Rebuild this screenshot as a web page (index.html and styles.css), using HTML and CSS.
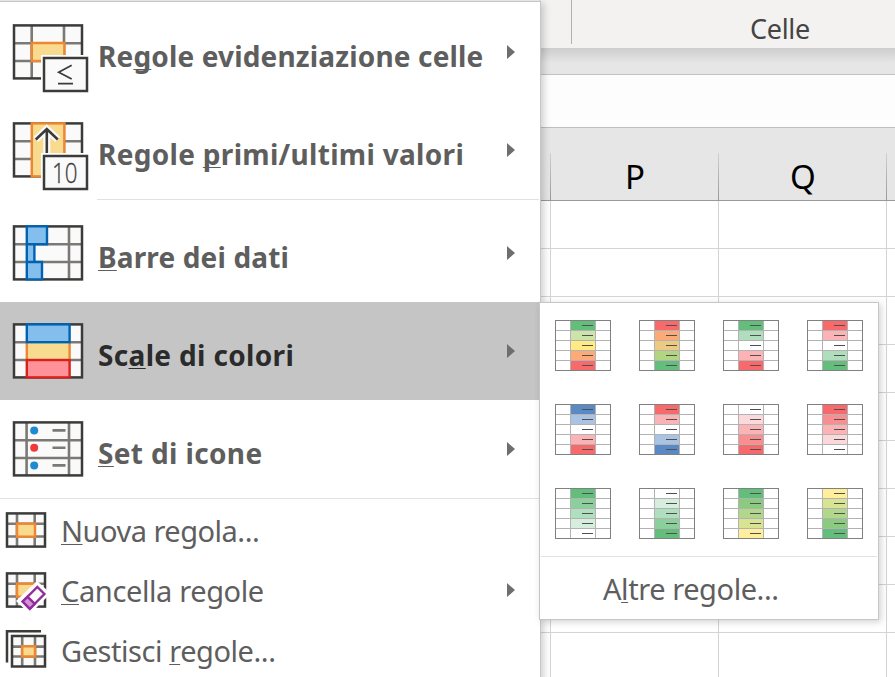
FILE: index.html
```html
<!DOCTYPE html>
<html lang="it">
<head>
<meta charset="utf-8">
<title>Formattazione condizionale</title>
<link rel="stylesheet" href="styles.css">
</head>
<body>
<svg class="defs" width="0" height="0">
  <symbol id="scale" viewBox="0 0 56 51">
    <g shape-rendering="crispEdges">
      <rect width="56" height="51" fill="#808080"/>
      <rect x="1" y="1" width="54" height="49" fill="#b2b2b2"/>
      <path fill="#fff" d="M1 1h14v9H1zM1 11h14v9H1zM1 21h14v9H1zM1 31h14v9H1zM1 41h14v9H1zM41 1h14v9H41zM41 11h14v9H41zM41 21h14v9H41zM41 31h14v9H41zM41 41h14v9H41z"/>
      <rect class="s1" x="16" y="1" width="24" height="9"/>
      <rect class="s2" x="16" y="11" width="24" height="9"/>
      <rect class="s3" x="16" y="21" width="24" height="9"/>
      <rect class="s4" x="16" y="31" width="24" height="9"/>
      <rect class="s5" x="16" y="41" width="24" height="9"/>
      <path fill="#505050" d="M27 5h11v1H27zM27 15h11v1H27zM27 25h11v1H27zM27 35h11v1H27zM27 45h11v1H27z"/>
    </g>
  </symbol>
</svg>

<main class="excel">
  <header class="ribbon"><div class="group">Celle</div></header>
  <div class="band"></div>
  <div class="formula"></div>
  <div class="columns"><span></span><span>P</span><span>Q</span><span></span></div>
  <div class="cells"></div>
</main>

<nav class="menu">
  <a class="item large">
    <svg class="icon" viewBox="0 0 98 98">
      <rect class="paper" x="14" y="22.4" width="68" height="53"/>
      <path class="lines" d="M31.7 23V75M64 23V75M15 40.3H81M15 58H81"/>
      <rect class="frame" x="14" y="22.4" width="68" height="53"/>
      <rect class="gold" x="31.8" y="40" width="32.6" height="18"/>
      <rect class="halo" x="41" y="52" width="49" height="40"/>
      <rect class="paper frame2" x="44" y="55" width="43" height="33"/>
      <path class="thin" d="M71.7 62.3L58.7 69.2L71.7 76M58 80.7H73"/>
    </svg>
    <span class="label t1">Re<u>g</u>ole evidenziazione celle</span><i class="arrow"></i>
  </a>
  <a class="item large">
    <svg class="icon" viewBox="0 0 98 98">
      <rect class="paper" x="14" y="22.4" width="68" height="53"/>
      <path class="lines" d="M15 40.3H81M15 58H81"/>
      <rect class="frame" x="14" y="22.4" width="68" height="53"/>
      <rect class="gold" x="31.8" y="22.4" width="32.6" height="53"/>
      <path class="arrowhalo" d="M46.8 54V29M35.8 38.5L46.8 28L57.8 38.5"/>
      <path class="arrowink" d="M46.8 54V29M35.8 38.5L46.8 28L57.8 38.5"/>
      <rect class="halo" x="41" y="52" width="49" height="40"/>
      <rect class="paper frame2" x="44" y="55" width="43" height="33"/>
      <text class="ten" x="52" y="81.7" textLength="25.5" lengthAdjust="spacingAndGlyphs">10</text>
    </svg>
    <span class="label t2">Regole <u>p</u>rimi/ultimi valori</span><i class="arrow"></i>
  </a>
  <hr class="inset">
  <a class="item large">
    <svg class="icon" viewBox="0 0 98 98">
      <rect class="paper" x="14" y="22.4" width="68" height="53"/>
      <path class="lines" d="M69 23V75M15 40.3H81M15 58H81"/>
      <rect class="frame" x="14" y="22.4" width="68" height="53"/>
      <path class="blue" d="M26.8 22.4H47V40.2H34.4V58H42V75.4H26.8ZM26.8 40.2H34.4M26.8 58H34.4"/>
    </svg>
    <span class="label t3"><u>B</u>arre dei dati</span><i class="arrow"></i>
  </a>
  <a class="item large active">
    <svg class="icon" viewBox="0 0 98 98">
      <rect class="paper" x="14" y="22.4" width="68" height="53"/>
      <path class="lines" d="M15 40.3H81M15 58H81"/>
      <rect class="frame" x="14" y="22.4" width="68" height="53"/>
      <path class="goldfill" d="M26.8 40H69.6V58H26.8Z"/>
      <path class="goldside" d="M26.8 40V58M69.6 40V58"/>
      <rect class="blue" x="26.8" y="22.4" width="42.8" height="17.8"/>
      <rect class="red" x="26.8" y="58" width="42.8" height="17.4"/>
    </svg>
    <span class="label t4">Sc<u>a</u>le di colori</span><i class="arrow"></i>
  </a>
  <a class="item large">
    <svg class="icon" viewBox="0 0 98 98">
      <rect class="paper" x="14" y="22.4" width="68" height="53"/>
      <path class="lines" d="M26.6 23V75M69 23V75M15 40.3H81M15 58H81M52.5 30.4H65.5M52.5 47.8H65.5M52.5 65.4H65.5"/>
      <rect class="frame" x="14" y="22.4" width="68" height="53"/>
      <circle class="dot" cx="34.2" cy="30.4" r="4"/>
      <circle class="dot alert" cx="34.2" cy="47.8" r="4"/>
      <circle class="dot" cx="34.2" cy="65.4" r="4"/>
    </svg>
    <span class="label t5"><u>S</u>et di icone</span><i class="arrow"></i>
  </a>
  <hr>
  <a class="item small">
    <svg class="icon" viewBox="0 0 60 60">
      <rect class="paper" x="7" y="11.4" width="38" height="33.2"/>
      <path class="lines" d="M17 12V44M34.7 12V44M8 21.7H44M8 34.5H44"/>
      <rect class="frame" x="7" y="11.4" width="38" height="33.2"/>
      <rect class="gold" x="17" y="21.7" width="18" height="13"/>
    </svg>
    <span class="label t6"><u>N</u>uova regola...</span>
  </a>
  <a class="item small">
    <svg class="icon" viewBox="0 0 60 60">
      <rect class="paper" x="7" y="11.4" width="38" height="33.2"/>
      <path class="lines" d="M17 12V44M34.7 12V44M8 21.7H44M8 34.5H44"/>
      <rect class="frame" x="7" y="11.4" width="38" height="33.2"/>
      <rect class="gold" x="17" y="21.7" width="18" height="13"/>
      <path class="halo" d="M37 19L48 29V34L30 52L16 39Z"/>
      <path class="eraser" d="M37.4 25L44.4 32L29.8 46.8L22.7 39.5Z"/>
      <path class="eraser tip" d="M27.6 34.8L34.8 41.8L29.8 46.8L22.7 39.5Z"/>
    </svg>
    <span class="label t7"><u>C</u>ancella regole</span><i class="arrow"></i>
  </a>
  <a class="item small">
    <svg class="icon" viewBox="0 0 60 60">
      <path class="frame" d="M41 9.2H7V40.5"/>
      <rect class="paper" x="12" y="14" width="33" height="30.5"/>
      <path class="lines" d="M22.2 15V44M35 15V44M13 24.6H44M13 34.5H44"/>
      <rect class="frame" x="12" y="14" width="33" height="30.5"/>
      <rect class="gold" x="22.2" y="24.3" width="12.8" height="10.2"/>
    </svg>
    <span class="label t8">Gestisci <u>r</u>egole...</span>
  </a>
</nav>

<section class="submenu">
  <div class="gallery">
    <svg class="g1"><use href="#scale"/></svg>
    <svg class="g2"><use href="#scale"/></svg>
    <svg class="g3"><use href="#scale"/></svg>
    <svg class="g4"><use href="#scale"/></svg>
    <svg class="g5"><use href="#scale"/></svg>
    <svg class="g6"><use href="#scale"/></svg>
    <svg class="g7"><use href="#scale"/></svg>
    <svg class="g8"><use href="#scale"/></svg>
    <svg class="g9"><use href="#scale"/></svg>
    <svg class="g10"><use href="#scale"/></svg>
    <svg class="g11"><use href="#scale"/></svg>
    <svg class="g12"><use href="#scale"/></svg>
  </div>
  <a class="more"><span class="t9">A<u>l</u>tre regole...</span></a>
</section>
</body>
</html>
```
FILE: styles.css
```css
* { box-sizing: border-box; }
body {
  margin: 0;
  width: 895px;
  height: 677px;
  overflow: hidden;
  position: relative;
  background: #fff;
  font-family: "Noto Sans", "Open Sans", sans-serif;
  color: #5e5e5e;
}
.defs { position: absolute; }

/* worksheet */
.excel { height: 677px; display: flex; flex-direction: column; }
.ribbon { height: 48px; background: #f3f2f0; padding-left: 571px; }
.group {
  height: 44px;
  border-left: 1px solid #b3b1af;
  padding: 9px 0 0 178px;
  font-size: 27px;
  line-height: 40px;
  letter-spacing: -0.3px;
  color: #444;
}
.band {
  height: 27px;
  background: linear-gradient(#cdcdcd, #e6e6e6 15px);
  border-bottom: 1px solid #c3c3c3;
}
.formula { height: 53px; background: #fdfdfd; border-bottom: 1px solid #bfbfbf; }
.columns {
  height: 73px;
  padding-top: 25px;
  background: #e6e6e6;
  border-bottom: 1px solid #999;
  display: grid;
  grid-template-columns: 551px 168px 168px 8px;
}
.columns span {
  text-align: center;
  color: #000;
  font-size: 33px;
  line-height: 47px;
  background: linear-gradient(#d0d0d0, #999) right / 1px 100% no-repeat;
}
.columns span:last-child { background: none; }
.cells {
  flex: 1;
  background:
    repeating-linear-gradient(transparent 0 47px, #d4d4d4 47px 48px),
    repeating-linear-gradient(90deg, transparent 0 167px, #d4d4d4 167px 168px) 47px 0;
}

/* menu */
.menu {
  position: absolute;
  left: 0;
  top: 0;
  width: 541px;
  height: 690px;
  padding-top: 2px;
  background: #fff;
  border-top: 1px solid #e5e5e5;
  border-right: 1px solid #c6c6c6;
  box-shadow: inset 0 1px #c6c6c6, 3px 3px 7px rgba(0, 0, 0, .18);
}
.item { display: flex; position: relative; }
.large { height: 98px; font-weight: 700; font-size: 28px; }
.small { height: 60px; font-size: 29px; }
.large .icon { width: 98px; height: 98px; }
.small .icon { width: 60px; height: 60px; }
.icon { flex: none; }
.label { white-space: nowrap; }
.large .label { line-height: 106px; }
.small .label { line-height: 58px; padding-left: 1px; }
.active { background: #c5c5c5; color: #2b2b2b; }
.t1 { letter-spacing: .16px; }
.t2 { letter-spacing: .31px; }
.t3 { letter-spacing: .15px; }
.t4 { letter-spacing: .34px; }
.t5 { letter-spacing: .36px; }
.t6 { letter-spacing: -.5px; }
.t7 { letter-spacing: -.38px; }
.t8 { letter-spacing: -.44px; }
.t9 { letter-spacing: -.43px; }
u {
  text-decoration: underline;
  text-decoration-thickness: 1px;
  text-underline-offset: 2px;
  text-decoration-skip-ink: none;
}
.arrow {
  position: absolute;
  left: 507px;
  top: 42px;
  border-left: 8px solid #6e6e6e;
  border-top: 7px solid transparent;
  border-bottom: 7px solid transparent;
}
.small .arrow { top: 21px; }
hr { height: 4px; margin: 0; border: 0; border-top: 1px solid #e1e1e1; }
hr.inset { height: 5px; margin: 0 1px 0 97px; }

/* icon parts */
.icon * { fill: none; }
.icon .paper { fill: #fafafa; }
.lines { stroke: #7a7974; stroke-width: 2.6; }
.frame, .frame2 { stroke: #3b3b39; stroke-width: 2.5; }
.icon .gold { fill: #f8db8f; stroke: #ed8733; stroke-width: 2.5; }
.icon .goldfill { fill: #f8db8f; }
.goldside { stroke: #ed8733; stroke-width: 2.4; }
.icon .blue { fill: #83beec; stroke: #0063b1; stroke-width: 2.4; }
.icon .red { fill: #ff9199; stroke: #d6211c; stroke-width: 2.4; }
.icon .halo { fill: #fff; }
.icon .dot { fill: #1f8ad0; }
.icon .alert { fill: #ef3a3a; }
.thin { stroke: #3b3b39; stroke-width: 1.7; }
.arrowink { stroke: #3b3b39; stroke-width: 2.6; }
.arrowhalo { stroke: #fafafa; stroke-width: 7; }
.icon .ten { fill: #3b3b39; stroke: #3b3b39; stroke-width: .3; font: 300 28px "Open Sans", sans-serif; }
.icon .eraser { fill: #fafafa; stroke: #922c9c; stroke-width: 2.4; }
.icon .tip { fill: #d492d8; }

/* submenu */
.submenu {
  position: absolute;
  left: 539px;
  top: 302px;
  width: 340px;
  height: 318px;
  background: #fff;
  border: 1px solid #c6c6c6;
  box-shadow: 2px 2px 7px rgba(0, 0, 0, .18);
}
.gallery {
  height: 253px;
  padding: 17px 0 0 15px;
  display: grid;
  grid-template-columns: repeat(4, 84px);
  grid-auto-rows: 84px;
}
.gallery svg { width: 56px; height: 51px; }
.more {
  display: block;
  margin: 0 1px;
  border-top: 1px solid #e1e1e6;
  padding-left: 62px;
  font-size: 29px;
  line-height: 63px;
  white-space: nowrap;
}
.s1 { fill: var(--a); }
.s2 { fill: var(--b); }
.s3 { fill: var(--c); }
.s4 { fill: var(--d); }
.s5 { fill: var(--e); }
.g1 { --a: #63be7b; --b: #cce3aa; --c: #ffeb84; --d: #fcaa78; --e: #f8696b; }
.g2 { --a: #f8696b; --b: #fcaa78; --c: #eec980; --d: #b1d580; --e: #63be7b; }
.g3 { --a: #63be7b; --b: #b0debd; --c: #fff; --d: #fbb3b5; --e: #f8696b; }
.g4 { --a: #f8696b; --b: #fbb3b5; --c: #fff; --d: #b0debd; --e: #63be7b; }
.g5 { --a: #5a8ac6; --b: #abc3e3; --c: #fff; --d: #fbb3b5; --e: #f8696b; }
.g6 { --a: #f8696b; --b: #fbb3b5; --c: #fff; --d: #abc3e3; --e: #5a8ac6; }
.g7 { --a: #fff; --b: #fbd9db; --c: #fbb3b5; --d: #f98e90; --e: #f8696b; }
.g8 { --a: #f8696b; --b: #f98e90; --c: #fbb3b5; --d: #fbd9db; --e: #fff; }
.g9 { --a: #63be7b; --b: #8acf9c; --c: #b0dfbf; --d: #d7eedf; --e: #fff; }
.g10 { --a: #fff; --b: #d7eedf; --c: #b0dfbf; --d: #8acf9c; --e: #63be7b; }
.g11 { --a: #63be7b; --b: #8acb80; --c: #b1d78a; --d: #d8e492; --e: #ffef9c; }
.g12 { --a: #ffef9c; --b: #d8e492; --c: #b1d78a; --d: #8acb80; --e: #63be7b; }
```
